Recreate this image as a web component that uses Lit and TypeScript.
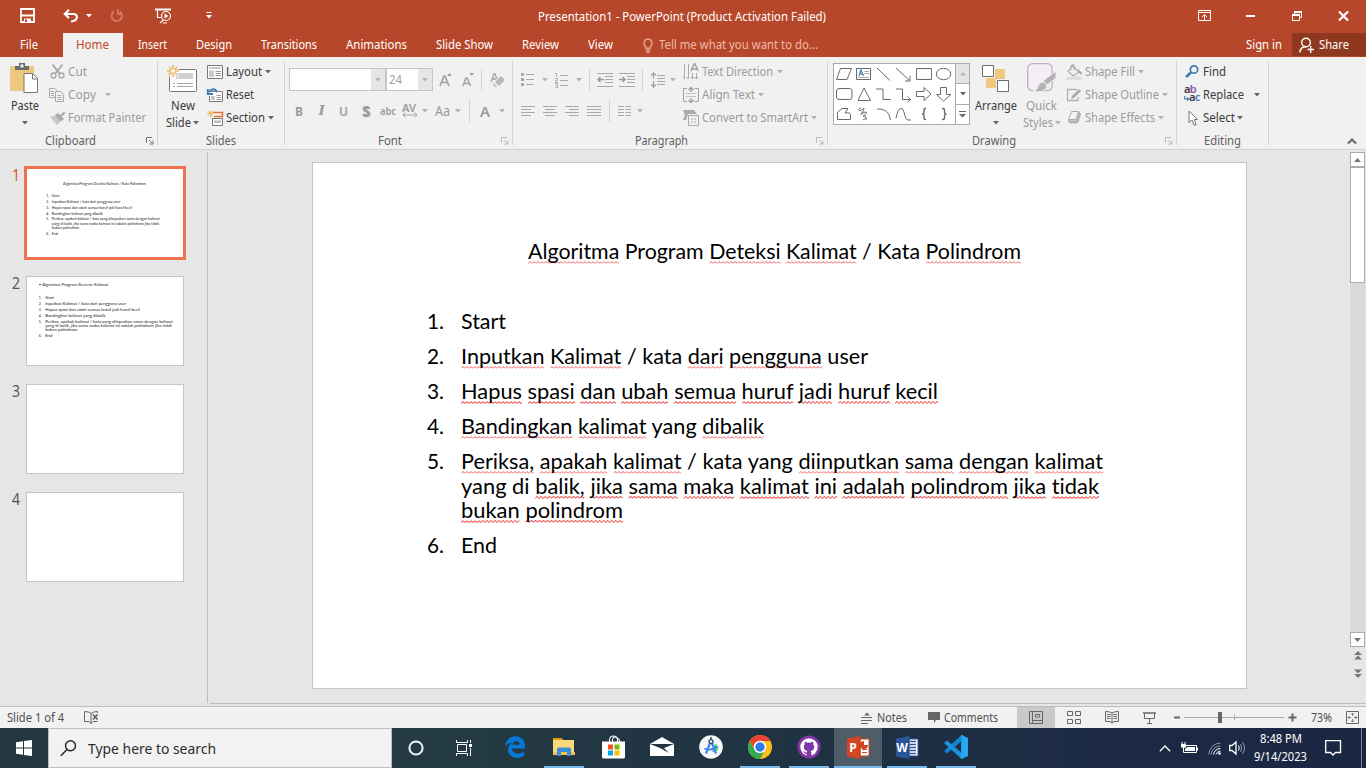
import { LitElement, html, svg, css, nothing, unsafeCSS } from "lit";
import { customElement, property } from "lit/decorators.js";
import { styleMap } from "lit/directives/style-map.js";

const UI = unsafeCSS(`"Noto Sans", "Open Sans", sans-serif`);

/** A single-line label that is condensed or widened to an exact width. */
@customElement("fit-text")
class FitText extends LitElement {
  @property({ type: Number }) w = 0;
  static styles = css`
    :host { display: inline-block; white-space: nowrap; flex: none; }
    .in { display: inline-block; transform-origin: 0 50%; white-space: nowrap; }
  `;
  render() {
    return html`<span class="in"><slot></slot></span>`;
  }
  firstUpdated() {
    const el = this.renderRoot.querySelector(".in") as HTMLElement;
    this.style.width = this.w + "px";
    const natural = el.getBoundingClientRect().width;
    const wanted = this.getBoundingClientRect().width;
    if (natural) el.style.transform = `scaleX(${wanted / natural})`;
  }
}

const t = (s: unknown, w: number, cls = "") => html`<fit-text class=${cls} .w=${w}>${s}</fit-text>`;
const ic = (w: number, h: number, body: unknown, cls = "") =>
  html`<svg class=${cls} width=${w} height=${h} viewBox="0 0 ${w} ${h}" fill="none">${body}</svg>`;
const caret = (c = "#666") => ic(6, 4, svg`<path d="M0 0H6L3 3.5Z" fill=${c}/>`);
const OFF = "#b4b4b4";

/** Row whose items begin at the given horizontal stops. */
const strip = (from: number, items: [number, unknown, string?][], cls = "") => html`<div class="strip ${cls}">
  <div class="cell" style=${styleMap({ width: items[0][0] - from + "px" })}></div>
  ${items.map(([x, node, c], i) => {
    const next = items[i + 1];
    return html`<div class="cell ${c ?? ""}" style=${next ? styleMap({ width: next[0] - x + "px" }) : nothing}>${node}</div>`;
  })}
</div>`;

const launcher = (c: string) => ic(8, 8, svg`<path d="M.5 6V.5H6M3 3l3.5 3.500M7 3.500V7H3.500" stroke=${c}/>`);

/* ---------- title bar ---------- */
const save = ic(15, 15, svg`<path d="M1 1H14V14H1Z" stroke="#fff" stroke-width="1.800"/><path d="M1 7.500H14" stroke="#fff" stroke-width="2"/><path d="M4 10.500H11V14H4Z" fill="#fff"/><path d="M5 11.500H7V14H5Z" fill="#b7472a"/>`);
const undo = ic(16, 14, svg`<path d="M2 5H10C16 5 15 12 8 12.500M6 .8L1.800 5L6 9" stroke="#fff" stroke-width="2.200"/>`);
const redo = ic(14, 14, svg`<path d="M4 2.500A5.200 5.200 0 1 0 10 2.800M8 .5V5H12.500" stroke="#d4796a" stroke-width="1.900"/>`);
const show = ic(17, 16, svg`<path d="M0 1.500H16" stroke="#fff" stroke-width="2"/><path d="M2.500 2V9.500H6M8.500 12L5 15M8 15H12" stroke="#fff" stroke-width="1.200"/><circle cx="11" cy="8" r="4.500" stroke="#fff" stroke-width="1.200"/><path d="M9.500 5.500V10.500L13.500 8Z" fill="#fff"/>`);
const qat = ic(6, 7, svg`<path d="M.5 .5H5.500" stroke="#fff"/><path d="M0 3H6L3 6.500Z" fill="#fff"/>`);
const ribOpt = ic(13, 11, svg`<path d="M.5 .5H12.500V10.500H.5ZM.5 2.500H12.500M6.500 10V4.500M4 7L6.500 4.500L9 7" stroke="#fff"/>`);
const mini = ic(9, 2, svg`<path d="M0 0H9V2H0Z" fill="#fff"/>`);
const restore = ic(10, 10, svg`<path d="M2.500 3V.5H9.500V6.500H8M.5 3.500H7.500V9.500H.5Z" stroke="#fff"/><path d="M2 1H10M0 4H8" stroke="#fff" stroke-width="2"/>`);
const close = ic(11, 10, svg`<path d="M1 .5L10 9.500M10 .5L1 9.500" stroke="#fff" stroke-width="2.200"/>`);
const bulb = ic(10, 15, svg`<path d="M3 10.500V9C0 7 .5 1 5 1S10 7 7 9V10.500ZM3 12.500H7M3.500 14.200H6.500" stroke="#eaa291" stroke-width="1.400"/>`);
const share = ic(16, 16, svg`<circle cx="7" cy="5.500" r="4.300" stroke="#fff" stroke-width="1.400"/><path d="M.8 15.500C1.200 11.500 3.500 9.700 7 9.700M8.500 12.500H15M11.700 9V16" stroke="#fff" stroke-width="1.400"/>`);

/* ---------- clipboard and slides ---------- */
const paste = ic(29, 31, svg`<path d="M0 3H24V28H0Z" fill="#edc87e"/><path d="M5 7V3H9V0H15V3H19V7Z" fill="#6d6d6d"/><path d="M10.500 1.500H13.500V4.500H10.500Z" fill="#f0f0f0"/><path d="M14 10.500H22.500L27.500 15.500V29.500H14Z" fill="#fff" stroke="#777"/><path d="M22.500 11V16H27.500" stroke="#777"/>`);
const cut = ic(15, 15, svg`<path d="M2.500 .5L10 10M12.500 .5L5 10" stroke="#a9a9a9" stroke-width="2"/><circle cx="3.500" cy="11.500" r="2.500" stroke="#a9a9a9" stroke-width="1.300"/><circle cx="11.500" cy="11.500" r="2.500" stroke="#a9a9a9" stroke-width="1.300"/>`);
const copy = ic(15, 14, svg`<path d="M.5 .5H5.500L8.500 3V9.500H.5ZM2 3.500H5M2 5.500H5M2 7.500H5" stroke="#a9a9a9"/><path d="M6.500 3.500H11.500L14.500 6.500V13.500H6.500Z" fill="#f4f1f5" stroke="#a9a9a9"/><path d="M8.500 7.500H12.500M8.500 9.500H12.500M8.500 11.500H12.500" stroke="#a9a9a9"/>`);
const brush = ic(16, 14, svg`<path d="M0 6L6 4.500L11 10L7 14Z" fill="#c9c5c9"/><path d="M5 4L8 2L14 8L11 10.500Z" fill="#a9a9a9"/><path d="M10 4.500L14 .5L15.500 2L11.500 6Z" fill="#a9a9a9"/>`);
const newSlide = ic(31, 28, svg`<path d="M2.500 5.500Q2.500 4.500 3.500 4.500H28.500Q29.500 4.500 29.500 5.500V25.500Q29.500 26.500 28.500 26.500H3.500Q2.500 26.500 2.500 25.500Z" fill="#fff" stroke="#777"/><path d="M9 8H26V14H9Z" fill="#d0d0d0"/><path d="M6 18.500H8M10 18.500H26M6 21.500H8M10 21.500H26" stroke="#a8a8a8"/><path d="M0 0H12V12H0Z" fill="#f0f0f0" opacity=".7"/><path d="M6 0V12M0 6H12M2 2L10 10M10 2L2 10" stroke="#eebc62" stroke-width="1.600"/><circle cx="6" cy="6" r="1.800" fill="#fff"/>`);
const layoutI = ic(16, 14, svg`<path d="M.5 .5H15.500V13.500H.5Z" fill="#fff" stroke="#777"/><path d="M2 2H14V4H2ZM2 5.500H7V12H2Z" fill="#c8c8c8"/><path d="M8.500 6.500H14M8.500 8.500H14M8.500 10.500H14" stroke="#999"/>`);
const reset = ic(16, 14, svg`<path d="M4 3.500H15.500V13.500H2.500V8" fill="#fff" stroke="#777"/><path d="M4 8H8V12H4Z" fill="#c8c8c8"/><path d="M9.500 7.500H14M9.500 9.500H14M9.500 11.500H14" stroke="#999"/><path d="M10 4C8 0 4 .5 2 4M.8 1V6H6" stroke="#3f7cb5" stroke-width="1.900"/>`);
const section = ic(16, 16, svg`<path d="M6 2.500H15.500V6.500H7" stroke="#e0782f" stroke-width="1.500"/><path d="M5.500 8.500H15.500V15.500H5.500Z" fill="#fff" stroke="#777"/><path d="M7 10.500H14V13H7Z" fill="#bbb"/><path d="M3.500 0V7M0 3.500H7M1 1L6 6M6 1L1 6" stroke="#eebc62"/>`);

/* ---------- paragraph ---------- */
const lines = (w: number, segs: [number, number][], h = 12) =>
  ic(w, h, segs.map(([a, b], i) => svg`<path d="M${a} ${i * 3 + 1.5}H${b}" stroke="#a9a9a9"/>`));
const bullets = ic(14, 15, svg`<path d="M5 2.500H13M5 7.500H13M5 12.500H13" stroke="#a9a9a9"/><path d="M0 1H3V4H0ZM0 6H3V9H0ZM0 11H3V14H0Z" fill="#a9a9a9"/>`);
const numbering = ic(14, 16, svg`<path d="M5 3.500H13M5 8.500H13M5 13.500H13" stroke="#a9a9a9"/><path d="M0 1.500H1.500V5M0 6.500H2.500V8.500H.5V10.500H3M0 11.500H2.500V15.500H0M.5 13.500H2" stroke="#a9a9a9" stroke-width=".9"/>`);
const dent = (right: boolean) => ic(17, 14, svg`<path d="M0 .5H16M0 13.500H16M8 3.500H16M8 6.500H16M8 9.500H16" stroke="#a9a9a9"/><path d=${right ? "M0 6.500H6M3.500 4L6 6.500L3.500 9" : "M7 6.500H1M3.500 4L1 6.500L3.500 9"} stroke="#999" stroke-width="1.500"/>`);
const spacing = ic(15, 16, svg`<path d="M6 3.500H14M6 6.500H14M6 9.500H14M6 12.500H14" stroke="#a9a9a9"/><path d="M2.500 1V6.500M.3 3.500L2.500 1L4.700 3.500M2.500 9V15M.3 12.500L2.500 15L4.700 12.500" stroke="#a0a0a0" stroke-width="1.200"/>`);
const columns = ic(14, 12, [0, 3, 6, 9].map((y) => svg`<path d="M0 ${y + 1.5}H6M7.500 ${y + 1.5}H13" stroke="#a9a9a9"/>`));
const textDir = ic(16, 16, svg`<path d="M1.500 0V15M5.500 0V15M9.500 9V15M13.500 9V15M0 13L1.500 15M4 13L5.500 15M8 13L9.500 15L11 13M12 13L13.500 15L15 13" stroke="#a9a9a9"/><path d="M8 7L11 0H12L15 7M9 5H14" stroke="#a0a0a0" stroke-width="1.400"/>`);
const alignText = ic(16, 16, svg`<path d="M4 1.500H.5V14.500H4M11.500 1.500H15.500V14.500H11.500" stroke="#a9a0ad"/><path d="M3 6.500H13M3 9.500H13" stroke="#b4a8b8" stroke-dasharray="1.500 .8"/><path d="M8 0V5M5.500 3L8 .5L10.500 3M8 16V11M5.500 13L8 15.500L10.500 13" stroke="#a0a0a0" stroke-width="1.300"/>`);
const smart = ic(16, 16, svg`<path d="M0 0H11L14 4H5L3 10H0L2 5Z" fill="#a9a9a9"/><path d="M5.500 5.500H15.500V15.500H5.500Z" fill="#f3eff4" stroke="#a9a9a9"/><path d="M8 9H10M11 9H13M8 12H10M11 12H13" stroke="#a9a9a9"/>`);

/* ---------- font group ---------- */
const growA = ic(14, 15, svg`<path d="M1 14L5 4H6L10 14M2.500 10.500H8.500" stroke="#a5a5a5" stroke-width="1.700"/><path d="M8 4H13L10.500 1Z" fill="#a0a0a0"/>`);
const shrinkA = ic(13, 15, svg`<path d="M1 14L4 6H5L8.500 14M2.500 11.500H7.500" stroke="#a5a5a5" stroke-width="1.600"/><path d="M7.500 1H12L9.800 4Z" fill="#a0a0a0"/>`);
const eraser = ic(16, 16, svg`<path d="M1 10L4 2H5L7 7M2 7H6" stroke="#a5a5a5" stroke-width="1.300"/><path d="M11 4L15 8L9 14L5 10Z" fill="#b8b8b8"/><path d="M4 11L7.500 14.500L5.500 15.500L2.500 13Z" fill="#c9c9c9"/>`);
const av = html`<span class="av">${t("AV", 14)}${ic(16, 6, svg`<path d="M1 3H15M3.500 .5L1 3L3.500 5.500M12.500 .5L15 3L12.500 5.500" stroke="#a0a0a0"/>`)}</span>`;

/* ---------- drawing ---------- */
const G = "#6a6a6a";
const shapes = [
  svg`<path d="M6.500 4.500H17.500L13 15.500H2.500Z" stroke=${G}/>`,
  svg`<path d="M2.500 4.500H16.500V15.500H2.500Z" stroke=${G}/><path d="M5 12L7 6L9.500 12M5.500 10H9" stroke="#3f7cb5" stroke-width="1.200"/><path d="M10.500 7.500H15M10.500 9.500H15M4 13.500H15" stroke="#aaa"/>`,
  svg`<path d="M3 4L16 16.500" stroke=${G}/>`,
  svg`<path d="M2 4L15.500 16.500M16 12V17H11" stroke=${G}/>`,
  svg`<path d="M2.500 4.500H17.500V15.500H2.500Z" stroke=${G}/>`,
  svg`<ellipse cx="9.500" cy="10" rx="7.200" ry="5.700" stroke=${G}/>`,
  svg`<rect x="2.500" y="4.500" width="15.500" height="11" rx="2.500" stroke=${G}/>`,
  svg`<path d="M10 4L16.500 16.500H4Z" stroke=${G}/>`,
  svg`<path d="M2 5H9V15.500H17" stroke=${G}/>`,
  svg`<path d="M2 5H8.500V15.500H16M13.500 12.500L16.500 15.500L13.500 18" stroke=${G}/>`,
  svg`<path d="M2.500 7.500H10V3.500L17 10L10 16.500V12.500H2.500Z" stroke=${G}/>`,
  svg`<path d="M6.500 3.500H12.500V10.500H17L9.500 17L2.500 10.500H6.500Z" stroke=${G}/>`,
  svg`<path d="M4 8L8 4.500H14L11 9Q16.500 8 16.500 11V15.500H3.500V8" stroke=${G}/>`,
  svg`<path d="M7 4Q3 5 6 7Q13 1 8 9Q4 12 11 8Q15 8 9 12Q12 11 12 14L9 16M12 14V16" stroke=${G}/>`,
  svg`<path d="M3 5Q15 4 16.500 16" stroke=${G}/>`,
  svg`<path d="M2 14Q4 4 7 4.500C11 4 10 16 14 16H17" stroke=${G}/>`,
  svg`<path d="M12 4.500H11Q10 4.500 10 6V8Q10 10 8 10Q10 10 10 12V14Q10 15.500 11 15.500H12" stroke=${G} stroke-width="1.400"/>`,
  svg`<path d="M8 4.500H9Q10.500 4.500 10.500 6V8Q10.500 10 12.500 10Q10.500 10 10.500 12V14Q10.500 15.500 9 15.500H8" stroke=${G} stroke-width="1.400"/>`,
];
const arrange = ic(28, 28, svg`<path d="M13 4H23V14H13ZM4 13H14V23H4Z" fill="#eec87e"/><path d="M.5 .5H11.500V11.500H.5ZM15.500 15.500H26.500V26.500H15.500Z" fill="#fff" stroke="#6d6d6d"/>`);
const quick = ic(30, 31, svg`<rect x=".7" y=".7" width="24.500" height="27" rx="5" fill="#f3eff5" stroke="#b9b4bb" stroke-width="1.300"/><path d="M29 8V15L20 22L16 18Z" fill="#b4b0b4" stroke="#f0f0f0"/><path d="M16 19Q20 20 20 24Q16 31 6 28Q11 27 11 23Q12 19 16 19Z" fill="#b4b0b4" stroke="#f0f0f0"/>`);
const fillI = ic(17, 16, svg`<path d="M7 2L13 8L7 12L2 7ZM5 6V2Q7-1 8 2V6" stroke="#aaa" stroke-width="1.200"/><path d="M12 5L16 9V11L13 9Z" fill="#aaa"/><path d="M0 12.500H16V16H0Z" fill="#e2dde4"/>`);
const outl = ic(16, 14, svg`<path d="M11 1.500H1.500V12.500H12V9" stroke="#b4aeb7" stroke-width="1.300"/><path d="M5 11L6 8L13 1L15 3L8 10Z" fill="#aaa"/>`);
const effects = ic(16, 15, svg`<path d="M6 3H15L13 12H3Z" fill="#cac6cb"/><path d="M5.500 1.500H12.500L10 9.500H2.500Z" fill="#f5f1f7" stroke="#aaa"/><path d="M2.500 10L4 12.500H11L14 4.500L12.500 2" stroke="#aaa" stroke-width="1.500"/>`);
const find = ic(14, 13, svg`<circle cx="9" cy="4.500" r="3.700" stroke="#3f7cb5" stroke-width="1.700"/><path d="M6 7.500L1 12" stroke="#3f7cb5" stroke-width="2.500"/>`);
const replace = html`<span class="rep"><span>a<b class="pu">b</b></span><span class="r2">${ic(5, 5, svg`<path d="M.7 0V3H4.500M3 1.500L4.500 3L3 4.500" stroke="#3f7cb5" stroke-width="1.200"/>`)}a<b class="bl">c</b></span></span>`;
const select = ic(10, 16, svg`<path d="M1 1V12.500L4 10L6 15H8L6.500 9.500H9.500Z" fill="#fff" stroke="#777"/>`);

/* ---------- slide content ---------- */
type Line = [string, number];
const LIST: { n: string; lines: Line[] }[] = [
  { n: "1.", lines: [["Start", 45]] },
  { n: "2.", lines: [["~Inputkan ~Kalimat / kata ~dari ~pengguna user", 407]] },
  { n: "3.", lines: [["~Hapus ~spasi ~dan ~ubah ~semua ~huruf ~jadi ~huruf ~kecil", 477]] },
  { n: "4.", lines: [["~Bandingkan ~kalimat yang ~dibalik", 303]] },
  {
    n: "5.",
    lines: [
      ["~Periksa, ~apakah ~kalimat / kata yang ~diinputkan ~sama ~dengan ~kalimat", 642],
      ["yang di ~balik, ~jika ~sama ~maka ~kalimat ~ini ~adalah ~polindrom ~jika ~tidak", 638],
      ["~bukan ~polindrom", 162],
    ],
  },
  { n: "6.", lines: [["End", 36]] },
];
const words = (s: string) =>
  s.split(" ").map((w, i) => html`${i ? " " : ""}${w[0] === "~" ? html`<span class="sq">${w.slice(1)}</span>` : w}`);
const slide = (kind: "first" | "second") => {
  const k = kind === "second" ? 1.183 : 1;
  return html`<div class="slide ${kind}">
    <div class="stitle">${kind === "first" ? t(words("~Algoritma Program ~Deteksi ~Kalimat / Kata ~Polindrom"), 493) : t("• Algoritma Program Reverse Kalimat", 413)}</div>
    ${LIST.map((r) => html`<div class="li"><span class="num">${t(r.n, 17)}</span><div>${r.lines.map(([s, w]) => html`<div class="ln">${t(words(s), w * k)}</div>`)}</div></div>`)}
  </div>`;
};

/* ---------- status bar ---------- */
const S = "#666";
const spell = ic(15, 13, svg`<path d="M7 2.500Q5 .5 .5 .5V10.500H5L7 12.500V2.500Q9 .5 13.500 .5V2M13.500 10.500H9L7 12.500" stroke=${S}/><path d="M9 3.500L13.500 8.500M13.500 3.500L9 8.500" stroke=${S} stroke-width="1.800"/>`);
const notes = ic(12, 12, svg`<path d="M3 3.500H9L6 .5Z" fill=${S}/><path d="M0 5.500H11M0 8.500H11M0 11.500H7" stroke=${S}/>`);
const comments = ic(13, 12, svg`<path d="M0 0H12V8H8L6 11.500V8H0Z" fill=${S}/>`);
const normal = ic(14, 13, svg`<path d="M.5 .5H13.500V12.500H.5ZM3.500 .5V12.500M3.500 9.500H13.500M6.500 3.500H10.500V6H6.500Z" stroke=${S}/>`);
const sorter = ic(14, 13, svg`<path d="M.5 .5H5.500V4.500H.5ZM8.500 .5H13.500V4.500H8.500ZM.5 8.500H5.500V12.500H.5ZM8.500 8.500H13.500V12.500H8.500Z" stroke=${S}/>`);
const reading = ic(14, 13, svg`<path d="M7 2Q5 .5 .5 .5V10.500H5L7 12L9 10.500H13.500V.5Q9 .5 7 2V12M2 3.500H5.500M2 5.500H5.500M2 7.500H5.500M8.500 3.500H12M8.500 5.500H12M8.500 7.500H12" stroke=${S}/>`);
const present = ic(13, 12, svg`<path d="M0 1H13" stroke=${S} stroke-width="1.500"/><path d="M1.500 1V6.500H11.500V1M6.500 6.500V11.500M4 11.500H9" stroke=${S}/>`);
const slider = ic(100, 13, svg`<path d="M0 6.500H100M50.500 3.500V9.500" stroke="#aaa"/><path d="M34 1H38V12H34Z" fill=${S}/>`);
const minus = ic(7, 3, svg`<path d="M0 1.500H6" stroke=${S} stroke-width="2"/>`);
const plus = ic(9, 9, svg`<path d="M.5 4.500H8.500M4.500 .5V8.500" stroke=${S} stroke-width="2"/>`);
const fit = ic(13, 13, svg`<path d="M.5 .5H12.500V12.500H.5Z" stroke=${S}/><path d="M6.500 2V5M5 3.500L6.500 2L8 3.500M6.500 11V8M5 9.500L6.500 11L8 9.500M2 6.500H5M3.500 5L2 6.500L3.500 8M11 6.500H8M9.500 5L11 6.500L9.500 8" stroke=${S} stroke-width=".8"/>`);

/* ---------- taskbar ---------- */
const win = ic(16, 16, svg`<path d="M0 2.300L7 1.300V7.500H0ZM8 1.100L16 0V7.500H8ZM0 8.500H7V14.700L0 13.700ZM8 8.500H16V16L8 14.900Z" fill="#fff"/>`);
const glass = ic(17, 17, svg`<circle cx="10.500" cy="5.800" r="5" stroke="#222" stroke-width="1.400"/><path d="M7 9.500L.8 15.800" stroke="#222" stroke-width="1.400"/>`);
const cortana = ic(16, 16, svg`<circle cx="8" cy="8" r="6.600" stroke="#f4f4f4" stroke-width="2"/>`);
const taskview = ic(17, 16, svg`<path d="M.5 0V2.500H11.500V0M.5 16V13.500H11.500V16M1.500 4.500H10.500V11.500H1.500ZM14.500 0V3M14.500 8V16" stroke="#fff"/><path d="M13 4H16V7H13Z" fill="#fff"/>`);
const edge = ic(21, 22, svg`<path d="M.3 10.200C1 4 5 .2 10.500 .2C16 .2 20 4.500 20 10V12.500H7C7.200 16 10 17.500 13 17.500C15.500 17.500 17.500 16.800 19 15.800V20C17 21.200 14.500 21.800 12 21.800C6 21.800 3 18 3 13.500C3 10.300 5 8 7.500 6.500C4.500 6.800 2 8 .3 10.200ZM7.300 8.800H14.500C14.500 6.500 13.300 5.200 11.200 5.200C9.200 5.200 7.800 6.500 7.300 8.800Z" fill="#0878d7"/>`);
const folder = ic(22, 20, svg`<path d="M0 1H8L10 3H21V18H0Z" fill="#f9d978"/><path d="M0 1H8L10 3H0Z" fill="#e29d0c"/><path d="M0 15H22V18H0Z" fill="#f2c14f"/><path d="M4 19V12Q4 10.500 5.500 10.500H16.500Q18 10.500 18 12V19H14V15H8V19Z" fill="#3b8fd8"/>`);
const store = ic(23, 24, svg`<path d="M7.500 7V4.500Q8 1 11.500 1T15.500 4.500V7M10.500 7V4.500Q11 2 13 2T17.500 5V7" stroke="#fff" stroke-width="1.100"/><path d="M0 6.500H23V22Q23 23.500 21.500 23.500H1.500Q0 23.500 0 22Z" fill="#fff"/><path d="M6 9.500H11V14.500H6Z" fill="#f25022"/><path d="M12.500 9.500H17.500V14.500H12.500Z" fill="#7fba00"/><path d="M6 15.500H11V20.500H6Z" fill="#00a4ef"/><path d="M12.500 15.500H17.500V20.500H12.500Z" fill="#ffb900"/>`);
const mail = ic(25, 20, svg`<path d="M0 7L12 0L24 7V19H0Z" fill="#fff"/><path d="M0 7L24 7L14 11L19 16L10 11Z" fill="#20333f"/>`);
const studio = ic(24, 24, svg`<circle cx="12" cy="12" r="11.800" fill="#f5f6f7"/><path d="M16 8.500Q20 10.500 19 15L16 17H13Z" fill="#59d28b"/><path d="M5.500 13.500Q12 16.500 18 11.500" stroke="#3f7fe0" stroke-width="1.800"/><path d="M11.500 7L7 18.500M12.500 7L17 18.500" stroke="#4286f5" stroke-width="2.200"/><circle cx="12" cy="6.500" r="1.900" fill="#fff" stroke="#2e5379" stroke-width="1.400"/><path d="M12 2V5" stroke="#2e5379" stroke-width="1.600"/>`);
const chrome = ic(24, 24, svg`<circle cx="12" cy="12" r="12" fill="#fbc116"/><path d="M1.600 6A12 12 0 0 1 22.400 6H12A6 6 0 0 0 6.500 14Z" fill="#ea4335"/><path d="M1.600 6A12 12 0 0 0 12 24L17 15A6 6 0 0 1 6.800 15Z" fill="#34a853"/><circle cx="12" cy="12" r="6.200" fill="#fff"/><circle cx="12" cy="12" r="4.700" fill="#2f7bea"/>`);
const github = ic(24, 24, svg`<circle cx="12" cy="12" r="11.500" fill="#8136a5"/><circle cx="12" cy="12" r="8.700" fill="#fff"/><path d="M9.700 21V18C9.700 17 10 16.400 10.400 16C8 15.700 6.800 14.400 6.800 11.800Q6.800 10.300 7.800 9.300Q7.400 8 8 6.800Q9.200 6.800 10.400 7.700Q12 7.300 13.600 7.700Q14.800 6.800 16 6.800Q16.600 8 16.200 9.300Q17.200 10.300 17.200 11.800C17.200 14.400 16 15.700 13.600 16C14 16.400 14.300 17 14.300 18V21Z" fill="#8136a5"/><path d="M10 18.300C7.800 18.700 7.800 17 6.500 16.400" stroke="#8136a5" stroke-width="1.100"/>`);
const office = (c: string, c2: string, letter: string, body: unknown) =>
  html`<span class="office">${ic(23, 23, svg`<path d="M11 3H22V20H11Z" fill="#fff" stroke=${c}/>${body}<path d="M0 2.500L13.500 0V23L0 20.500Z" fill=${c}/><path d="M13 0V23" stroke=${c2}/>`)}<b class="ol">${letter}</b></span>`;
const ppt = office("#d24625", "#b83a1d", "P", svg`<path d="M15 13.500H20M15 16.500H20" stroke="#d24625"/><path d="M17 5V9H21A4 4 0 1 1 17 5Z" fill="#d24625"/>`);
const word = office("#2a5699", "#1f4680", "W", svg`<path d="M14 5.500H20M14 8.500H20M14 11.500H20M14 14.500H20M14 17.500H20" stroke="#2a5699" stroke-width="1.300"/>`);
const code = ic(24, 24, svg`<path d="M17.500 0L24 3V21L17.500 24Z" fill="#27a8f2"/><path d="M17.500 0L19 5L3 18.500L0 16Z" fill="#1184cf"/><path d="M17.500 24L19 19L3 5.500L0 8Z" fill="#1a94dd"/><path d="M18 0V24" stroke="#27a8f2" stroke-width="1.500"/>`);
const up = ic(12, 7, svg`<path d="M.8 6.200L6 1L11.200 6.200" stroke="#fff" stroke-width="1.300"/>`);
const battery = ic(17, 12, svg`<path d="M4 3.500H15.500V10.500H4" stroke="#fff"/><path d="M6 5H14V9H4V7ZM16 5.500H17V8.500H16ZM0 2H5V5Q3 7 0 5Z" fill="#fff"/><path d="M1 0V2M4 0V2M2.500 5V10.500H5" stroke="#fff"/>`);
const wifi = ic(13, 13, svg`<path d="M.8 12.500A12 12 0 0 1 12.500 1M3 12.500A9.500 9.500 0 0 1 12.500 4" stroke="#8d98a5"/><path d="M5.500 12.500A7 7 0 0 1 12.500 6.500M8 12.500A5 5 0 0 1 12.500 9" stroke="#fff"/><circle cx="11.500" cy="11.500" r="1.300" fill="#fff"/>`);
const vol = ic(17, 14, svg`<path d="M.7 4.500H3L7 1V13L3 9.500H.7Z" stroke="#fff" stroke-width="1.300"/><path d="M9.500 4.500Q11 7 9.500 9.500" stroke="#fff"/><path d="M11.500 3Q14 7 11.500 11M13.500 1Q17.500 7 13.500 13" stroke="#8d98a5"/>`);
const notif = ic(17, 17, svg`<path d="M.7 .7H15.500V12.500H10.500L8 15L5.500 12.500H.7Z" stroke="#fff" stroke-width="1.300"/>`);

@customElement("app-root")
class AppRoot extends LitElement {
  static styles = css`
    :host { display: flex; flex-direction: column; width: 1366px; height: 768px; overflow: hidden; background: #e6e6e6; font: 12px/16px ${UI}; color: #3b3b3b; }
    * { box-sizing: border-box; }
    svg { display: block; flex: none; overflow: visible; }
    .strip { display: flex; height: 100%; }
    .cell { flex: none; height: 100%; display: flex; align-items: center; white-space: nowrap; }
    .title { height: 33px; flex: none; background: #b7472a; color: #fff; }
    .title .strip { height: 31px; }
    .title fit-text { padding-top: 2px; }
    .tabs { height: 24px; flex: none; background: #b7472a; color: #fff; }
    .home { background: #f1f1f1; color: #c9431f; padding-left: 13px; }
    .tell { color: #f0b9aa; }
    .shareb { background: #8f3820; height: 23px; width: 74px; padding-left: 7px; gap: 4px; }
    .ribbon { height: 93px; flex: none; background: #f1f1f1; border-bottom: 1px solid #d2d2d2; display: flex; }
    .group { height: 100%; display: flex; flex-direction: column; background: linear-gradient(#d2d2d2, #d2d2d2) right 4px / 1px 84px no-repeat; }
    .body { height: 74px; flex: none; display: flex; padding-top: 3px; }
    .label { height: 18px; padding-top: 1px; color: #5f5f5f; }
    .clip { width: 158px; } .slidesg { width: 127px; } .fontg { width: 228px; } .para { width: 315px; } .draw { width: 349px; } .edit { width: 92px; }
    .rows { display: flex; flex-direction: column; }
    .rows > .strip { height: 23px; flex: none; }
    .off { color: #9b9b9b; }
    .big { flex: none; display: flex; flex-direction: column; align-items: center; }
    .bigic { height: 37px; display: flex; align-items: center; }
    .big .l { height: 17px; display: flex; align-items: center; gap: 2px; }
    .c2 { width: 49px; } .c3 { width: 50px; padding-left: 2px; } .c4 { width: 43px; }
    .duo > .strip { height: 31px; flex: none; }
    .duo { padding-top: 4px; }
    .body.wide { padding-top: 4px; }
    .combo { display: flex; height: 23px; border: 1px solid #c6c6c6; background: #fff; justify-content: space-between; align-items: center; padding-left: 2px; color: #9b9b9b; }
    .cf { width: 98px; } .cs { width: 47px; }
    .dd { width: 14px; height: 100%; background: #e6e6e6; display: flex; align-items: center; justify-content: center; }
    .vs { width: 1px; height: 22px; background: #d2d2d2; }
    .bold { font-weight: 700; font-size: 13px; } .ital { font: italic 700 14px "Liberation Serif", serif; } .und { text-decoration: underline; font-weight: 600; font-size: 13px; text-underline-offset: 2px; }
    .shad { font-weight: 700; font-size: 14px; text-shadow: 1px 1px 1px #999; } .strike { text-decoration: line-through; font-size: 11px; font-weight: 600; }
    .med { font-size: 14px; } .fa { font-size: 15px; font-weight: 600; }
    .av { display: flex; flex-direction: column; line-height: 9px; font-weight: 600; font-size: 11px; }
    .gallery { margin: 3px 0 0 5px; width: 137px; height: 62px; border: 1px solid #ababab; display: flex; background: #fff; flex: none; }
    .grid { width: 121px; display: grid; grid-template-columns: repeat(6, 20px); grid-auto-rows: 20px; }
    .gb { flex: 1; display: flex; flex-direction: column; border-left: 1px solid #ababab; }
    .gb div { flex: 1; display: flex; align-items: center; justify-content: center; border-top: 1px solid #ababab; }
    .gb div:first-child { background: #e4e4e4; border-top: 0; }
    .rep { display: flex; flex-direction: column; font: 600 11px/8px ${UI}; width: 17px; padding-bottom: 3px; letter-spacing: -0.8px; }
    .rep b { font-weight: 600; } .pu { color: #8e52ad; } .bl { color: #3f7cb5; } .r2 { display: flex; align-items: flex-end; }
    .collapse { flex: 1; display: flex; align-items: flex-end; justify-content: flex-end; padding: 0 9px 5px 0; }
    .main { height: 553px; display: flex; flex: none; }
    .thumbs { width: 208px; border-right: 1px solid #bdbdbd; margin: 2px 0 0; height: 551px; padding-top: 14px; display: flex; flex-direction: column; gap: 14px; }
    .trow { display: flex; height: 94px; flex: none; font-size: 16px; line-height: 18px; color: #555; }
    .trow .n { width: 24px; padding-left: 12px; padding-top: 0; }
    .trow.sel { color: #e0532f; }
    .box { width: 162px; height: 94px; border: 2px solid transparent; }
    .sel .box { border: 3px solid #f0714f; }
    .paper { width: 158px; height: 90px; background: #fff; border: 1px solid #c6c6c6; overflow: hidden; }
    .sel .paper { border: 0; width: 156px; height: 88px; }
    .mini { width: 933px; height: 525px; transform: scale(0.168); transform-origin: 0 0; }
    .stage { flex: 1; padding: 12px 0 0 104px; }
    .canvas { width: 935px; height: 527px; background: #fff; border: 1px solid #c6c6c6; }
    .slide { font: 21.8px/24.5px Lato, sans-serif; font-variant-ligatures: none; color: #000; padding-top: 76px; }
    .mini .slide { color: #222; }
    .stitle { height: 70px; padding-left: 215px; }
    .li { display: flex; margin-bottom: 10.5px; padding-left: 114px; }
    .num { width: 34px; display: block; }
    .ln { height: 24.5px; }
    .second.slide { padding-top: 31px; }
    .second .stitle { padding-left: 70px; height: 80px; }
    .second .li { padding-left: 70px; } .second .num { width: 38px; }
    .canvas .sq { background: url("data:image/svg+xml,%3Csvg xmlns='http://www.w3.org/2000/svg' width='4' height='3'%3E%3Cpath d='M0 2.500L2 .5L4 2.500' fill='none' stroke='%23f04a4a' stroke-width='.9'/%3E%3C/svg%3E") 0 100% / 4px 3px repeat-x; }
    .scroll { width: 16px; height: 100%; padding-top: 2px; display: flex; flex-direction: column; }
    .sb { width: 15px; height: 15px; border: 1px solid #ababab; background: #fff; display: flex; align-items: center; justify-content: center; flex: none; }
    .thumb { width: 15px; height: 116px; background: #fff; border: 1px solid #ababab; flex: none; }
    .track { width: 15px; height: 349px; background: #dadada; flex: none; }
    .pn { display: flex; flex-direction: column; align-items: center; padding: 4px 1px 0 0; gap: 9px; }
    .below { height: 3px; flex: none; margin-left: 210px; border-top: 1px solid #bdbdbd; }
    .status { height: 22px; border-top: 1px solid #bdbdbd; background: #f1f1f1; color: #505050; flex: none; }
    .cur { background: #c9c9c9; justify-content: center; }
    .task { height: 40px; flex: none; color: #fff; background: linear-gradient(90deg, #23383e 0, #243b43 30%, #1f3242 60%, #1c2945 85%, #1b2742); }
    .search { background: #f2f2f2; border: 1px solid #bdbdbd; color: #2d2d2d; font-size: 15px; line-height: 22px; padding-left: 11px; gap: 11px; }
    .ul, .nl { display: flex; height: 40px; width: 40px; align-items: center; justify-content: center; border-bottom: 2px solid transparent; }
    .ul { border-bottom-color: #76b9ed; }
    .act { background: #4f5d68; width: 48px; }
    .office { display: grid; }
    .office svg, .office .ol { grid-area: 1 / 1; }
    .ol { z-index: 1; font: 700 12px/23px ${UI}; width: 13px; text-align: center; }
    .clock { display: flex; flex-direction: column; align-items: center; line-height: 18px; padding-top: 2px; height: 40px; }
    .peek { border-left: 1px solid #7b8595; }
  `;

  /** Icon, caption and optional drop-down arrow of a compact ribbon command. */
  private row(from: number, icon: [number, unknown], label: [number, string, number], arrow?: [number, string]) {
    const items: [number, unknown][] = [icon, [label[0], t(label[1], label[2])]];
    if (arrow) items.push([arrow[0], caret(arrow[1])]);
    return strip(from, items);
  }

  private app(icon: unknown, open = false) {
    return html`<div class=${open ? "ul" : "nl"}>${icon}</div>`;
  }

  render() {
    const v = html`<div class="vs"></div>`;
    const oc = caret(OFF);
    return html`
      <div class="title">${strip(0, [
        [20, save], [63, undo], [86, caret("#fff")], [110, redo], [155, show], [205.5, qat],
        [538, t("Presentation1 - PowerPoint (Product Activation Failed)", 288)],
        [1198, ribOpt], [1246, mini], [1292, restore], [1338, close],
      ])}</div>
      <div class="tabs">${strip(0, [
        [20, t("File", 18)], [63, t("Home", 33), "home"], [123, ""], [138, t("Insert", 29)], [196, t("Design", 36)],
        [261, t("Transitions", 56)], [346, t("Animations", 61)], [436, t("Slide Show", 57)], [522, t("Review", 37)],
        [588, t("View", 25)], [643, bulb], [659, t("Tell me what you want to do...", 159), "tell"],
        [1246, t("Sign in", 36)], [1292, html`${share}${t("Share", 30)}`, "shareb"],
      ])}</div>
      <div class="ribbon">
        <div class="group clip">
          <div class="body">
            <div class="big c2"><div class="bigic">${paste}</div><div class="l">${t("Paste", 28)}</div><div class="l">${caret()}</div></div>
            <div class="rows off">
              ${this.row(49, [50, cut], [68, "Cut", 19])}
              ${this.row(49, [49, copy], [68, "Copy", 28], [105, OFF])}
              ${this.row(49, [50, brush], [68, "Format Painter", 78])}
            </div>
          </div>
          <div class="label">${strip(0, [[45, t("Clipboard", 51)], [146, launcher("#777")]])}</div>
        </div>
        <div class="group slidesg">
          <div class="body">
            <div class="big c2"><div class="bigic">${newSlide}</div><div class="l">${t("New", 24)}</div><div class="l">${t("Slide", 25)}${caret()}</div></div>
            <div class="rows">
              ${this.row(207, [207, layoutI], [226, "Layout", 36], [265, "#666"])}
              ${this.row(207, [207, reset], [226, "Reset", 28])}
              ${this.row(207, [207, section], [226, "Section", 39], [268, "#666"])}
            </div>
          </div>
          <div class="label">${strip(158, [[206, t("Slides", 30)]])}</div>
        </div>
        <div class="group fontg">
          <div class="body"><div class="rows duo off">
            ${strip(285, [
              [289, html`<div class="combo cf"><span></span><div class="dd">${oc}</div></div>`],
              [386, html`<div class="combo cs">${t("24", 13)}<div class="dd">${oc}</div></div>`],
              [439, growA], [462, shrinkA], [481, v], [490, eraser],
            ])}
            ${strip(285, [
              [295, t("B", 8, "bold")], [318, t("I", 7, "ital")], [339, t("U", 9, "und")], [362, t("S", 8, "shad")],
              [380, t("abc", 16, "strike")], [402, av], [422, oc], [435, t("Aa", 15, "med")], [455, oc], [469, v],
              [480, t("A", 10, "fa")], [499, oc],
            ])}
          </div></div>
          <div class="label">${strip(285, [[378, t("Font", 24)], [501, launcher("#b9b9b9")]])}</div>
        </div>
        <div class="group para">
          <div class="body">
            <div class="rows duo">
              ${strip(513, [[521, bullets], [542, oc], [555, numbering], [576, oc], [589, v], [597, dent(false)], [619, dent(true)], [642, v], [651, spacing], [670, oc], [683, ""]])}
              ${strip(513, [
                [521, lines(14, [[0, 14], [0, 10], [0, 14], [0, 10]])], [543, lines(14, [[0, 14], [2, 12], [0, 14], [2, 12]])],
                [565, lines(14, [[0, 14], [4, 14], [0, 14], [4, 14]])], [587, lines(14, [[0, 14], [0, 14], [0, 14], [0, 14]])],
                [609, v], [618, columns], [637, oc],
              ])}
            </div>
            <div class="rows off">
              ${this.row(683, [683, textDir], [702, "Text Direction", 71], [777, OFF])}
              ${this.row(683, [683, alignText], [702, "Align Text", 53], [758, OFF])}
              ${this.row(683, [683, smart], [702, "Convert to SmartArt", 106], [811, OFF])}
            </div>
          </div>
          <div class="label">${strip(513, [[635, t("Paragraph", 53)], [816, launcher("#b9b9b9")]])}</div>
        </div>
        <div class="group draw">
          <div class="body">
            <div class="gallery">
              <div class="grid">${shapes.map((s) => ic(20, 20, s))}</div>
              <div class="gb"><div>${ic(6, 4, svg`<path d="M0 3.500H6L3 0Z" fill="#b5b5b5"/>`)}</div><div>${caret()}</div><div>${ic(7, 7, svg`<path d="M0 .5H7" stroke="#666"/><path d="M0 3H7L3.500 6.500Z" fill="#666"/>`)}</div></div>
            </div>
            <div class="big c3"><div class="bigic">${arrange}</div><div class="l">${t("Arrange", 42)}</div><div class="l">${caret()}</div></div>
            <div class="big c4 off"><div class="bigic">${quick}</div><div class="l">${t("Quick", 31)}</div><div class="l">${t("Styles", 30)}${oc}</div></div>
            <div class="rows off">
              ${this.row(1063, [1066, fillI], [1085, "Shape Fill", 50], [1138, OFF])}
              ${this.row(1063, [1066, outl], [1085, "Shape Outline", 74], [1162, OFF])}
              ${this.row(1063, [1066, effects], [1085, "Shape Effects", 70], [1158, OFF])}
            </div>
          </div>
          <div class="label">${strip(828, [[972, t("Drawing", 44)], [1165, launcher("#b9b9b9")]])}</div>
        </div>
        <div class="group edit">
          <div class="body"><div class="rows">
            ${this.row(1177, [1185, find], [1203, "Find", 23])}
            ${this.row(1177, [1184, replace], [1203, "Replace", 41], [1254, "#666"])}
            ${this.row(1177, [1188, select], [1203, "Select", 32], [1237, "#666"])}
          </div></div>
          <div class="label">${strip(1177, [[1204, t("Editing", 37)]])}</div>
        </div>
        <div class="collapse">${ic(10, 6, svg`<path d="M1 5.500L5 1.500L9 5.500" stroke="#666" stroke-width="2"/>`)}</div>
      </div>
      <div class="main">
        <div class="thumbs">
          ${[1, 2, 3, 4].map((n) => html`<div class="trow ${n === 1 ? "sel" : ""}"><div class="n">${t(n, 8)}</div><div class="box"><div class="paper">${n < 3 ? html`<div class="mini">${slide(n === 1 ? "first" : "second")}</div>` : nothing}</div></div></div>`)}
        </div>
        <div class="stage"><div class="canvas">${slide("first")}</div></div>
        <div class="scroll">
          <div class="sb">${ic(7, 4, svg`<path d="M0 4H7L3.500 0Z" fill="#777"/>`)}</div>
          <div class="thumb"></div><div class="track"></div>
          <div class="sb">${ic(7, 4, svg`<path d="M0 0H7L3.500 4Z" fill="#777"/>`)}</div>
          <div class="pn">
            ${ic(8, 9, svg`<path d="M0 4H8L4 0ZM0 8.500H8L4 4.500Z" fill="#777"/>`)}
            ${ic(8, 9, svg`<path d="M0 .5H8L4 4.500ZM0 5H8L4 9Z" fill="#777"/>`)}
          </div>
        </div>
      </div>
      <div class="below"></div>
      <div class="status">${strip(0, [
        [7, t("Slide 1 of 4", 57)], [84, spell], [861, notes], [877, t("Notes", 30)], [928, comments], [944, t("Comments", 54)],
        [1017, normal, "cur"], [1055, ""], [1067, sorter], [1105, reading], [1143, present], [1174, minus], [1184, slider], [1288, plus],
        [1311, t("73%", 21)], [1346, fit],
      ])}</div>
      <div class="task">${strip(0, [
        [16, win], [48, html`${glass}${t("Type here to search", 128)}`, "search"], [392, ""], [408, cortana], [456, taskview],
        [495, this.app(edge)], [544, this.app(folder, true)], [593, this.app(store)], [642, this.app(mail)],
        [691, this.app(studio)], [740, this.app(chrome, true)], [789, this.app(github, true)],
        [834, html`<div class="ul act">${ppt}</div>`], [887, this.app(word, true)], [936, this.app(code, true)],
        [1159, up], [1181, battery], [1208, wifi], [1229, vol],
        [1254, html`<div class="clock">${t("8:48 PM", 42)}${t("9/14/2023", 53)}</div>`], [1325, notif], [1361, "", "peek"],
      ])}</div>
    `;
  }
}
